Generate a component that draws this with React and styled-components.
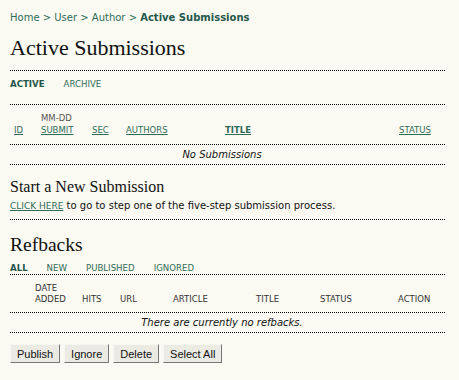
import React from "react";
import styled, { createGlobalStyle } from "styled-components";

const Global = createGlobalStyle`
  html, body { margin: 0; padding: 0; background: #fbfaf2; }
  body { font-family: "DejaVu Sans", Verdana, sans-serif; color: #222; }
`;

const LINK = "#2f6b58";

const Page = styled.div`
  width: 435px;
  padding: 11px 0 0 10px;
`;

const Breadcrumb = styled.div`
  font-size: 10px;
  line-height: 13px;
  color: ${LINK};
  b { font-weight: bold; color: #24574a; }
`;

const Heading = styled.h2`
  font-family: "Liberation Serif", Georgia, serif;
  font-weight: normal;
  font-size: ${(p) => p.$size || 22}px;
  line-height: ${(p) => p.$lh || 26}px;
  margin: ${(p) => p.$margin || "0"};
  color: #111;
`;

const Separator = styled.div`
  border-top: 1px dotted #000;
`;

const Tabs = styled.div`
  display: flex;
  gap: ${(p) => p.$gap || 19}px;
  font-size: 8.6px;
  line-height: 11px;
  padding: ${(p) => p.$pad || "8px 0 14px"};
`;

const Tab = styled.span`
  color: ${(p) => (p.$active ? "#24574a" : LINK)};
  font-weight: ${(p) => (p.$active ? "bold" : "normal")};
`;

const HeaderRow = styled.div`
  display: grid;
  grid-template-columns: ${(p) => p.$cols};
  align-items: end;
  font-size: 8.5px;
  line-height: ${(p) => p.$lh || 12}px;
  padding: ${(p) => p.$pad || "7px 0 8px"};
  border-top: 1px dotted #000;
  color: #333;
`;

const HeadLink = styled.span`
  color: ${LINK};
  text-decoration: underline;
  text-underline-offset: 1px;
`;

const Stack = styled.span`
  display: flex;
  flex-direction: column;
`;

const Small = styled.span`
  color: #555;
`;

const EmptyRow = styled.div`
  border-top: 1px dotted #000;
  border-bottom: 1px dotted #000;
  font-size: 10px;
  line-height: 13px;
  font-style: italic;
  text-align: center;
  padding: 3px 11px 3px 0;
  color: #111;
`;

const Para = styled.p`
  margin: 0;
  font-size: 10px;
  line-height: 14px;
  padding: 2px 0 6px;
  color: #111;
`;

const SmallLink = styled.span`
  font-size: 9px;
  color: ${LINK};
  text-decoration: underline;
`;

const Buttons = styled.div`
  display: flex;
  gap: 4px;
  margin-top: 11px;
`;

const Button = styled.button`
  font-family: "Liberation Sans", Arial, sans-serif;
  font-size: 11px;
  height: 19px;
  padding: 0 6px;
  background: #ebebe3;
  color: #111;
  border: 1px solid;
  border-color: #f7f7f2 #767676 #767676 #f7f7f2;
  border-radius: 0;
  cursor: pointer;
`;

export default function App() {
  return (
    <>
      <Global />
      <Page>
        <Breadcrumb>
          Home &gt; User &gt; Author &gt; <b>Active Submissions</b>
        </Breadcrumb>
        <Heading $margin="11px 0 9px">Active Submissions</Heading>
        <Separator />
        <Tabs>
          <Tab $active>ACTIVE</Tab>
          <Tab>ARCHIVE</Tab>
        </Tabs>
        <HeaderRow $cols="4px 27px 51px 34px 99px 174px 1fr">
          <span />
          <HeadLink>ID</HeadLink>
          <Stack>
            <Small>MM-DD</Small>
            <HeadLink>SUBMIT</HeadLink>
          </Stack>
          <HeadLink>SEC</HeadLink>
          <HeadLink>AUTHORS</HeadLink>
          <HeadLink as="b">TITLE</HeadLink>
          <HeadLink>STATUS</HeadLink>
        </HeaderRow>
        <EmptyRow>No Submissions</EmptyRow>
        <Heading $size={16} $lh={20} $margin="12px 0 0">Start a New Submission</Heading>
        <Para>
          <SmallLink>CLICK HERE</SmallLink> to go to step one of the five-step submission process.
        </Para>
        <Separator />
        <Heading $size={19.5} $lh={24} $margin="13px 0 0">Refbacks</Heading>
        <Tabs $gap={19} $pad="6px 0 0">
          <Tab $active>ALL</Tab>
          <Tab>NEW</Tab>
          <Tab>PUBLISHED</Tab>
          <Tab>IGNORED</Tab>
        </Tabs>
        <HeaderRow $cols="25px 47px 38px 53px 83px 64px 78px 1fr" $lh={11} $pad="8px 0 7px">
          <span />
          <Stack>
            <span>DATE</span>
            <span>ADDED</span>
          </Stack>
          <span>HITS</span>
          <span>URL</span>
          <span>ARTICLE</span>
          <span>TITLE</span>
          <span>STATUS</span>
          <span>ACTION</span>
        </HeaderRow>
        <EmptyRow>There are currently no refbacks.</EmptyRow>
        <Buttons>
          <Button>Publish</Button>
          <Button>Ignore</Button>
          <Button>Delete</Button>
          <Button>Select All</Button>
        </Buttons>
      </Page>
    </>
  );
}
